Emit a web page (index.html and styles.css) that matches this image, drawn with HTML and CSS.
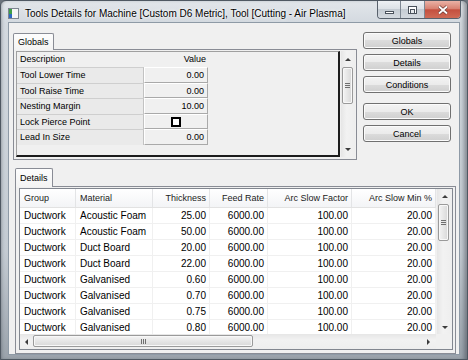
FILE: index.html
```html
<!DOCTYPE html>
<html lang="en">
<head>
    <meta charset="UTF-8">
    <title>Tools Details</title>
    <link rel="stylesheet" href="styles.css">
</head>
<body>
<div class="window">
    <div class="titlebar">
        <svg class="app-icon" viewBox="0 0 11 11">
            <rect x="0.5" y="0.5" width="10" height="10" fill="#f6f6f6" stroke="#7d8590"/>
            <rect x="1" y="1" width="3" height="5" fill="#3f9e48"/>
            <rect x="1" y="6" width="3" height="4" fill="#2f68c0"/>
        </svg>
        <span class="title">Tools Details for Machine [Custom D6 Metric], Tool [Cutting - Air Plasma]</span>
        <div class="caption">
            <span class="cap-btn cap-min"><i class="glyph-min"></i></span>
            <span class="cap-btn cap-max"><i class="glyph-max"></i></span>
            <span class="cap-btn cap-close">
                <svg width="12" height="10" viewBox="0 0 12 10">
                    <path d="M2 1.5 L10 8.5 M10 1.5 L2 8.5" stroke="#6b3a33" stroke-width="3.2"/>
                    <path d="M2 1.5 L10 8.5 M10 1.5 L2 8.5" stroke="#fff" stroke-width="1.8"/>
                </svg>
            </span>
        </div>
    </div>

    <div class="client">
        <div class="top-row">
            <div class="tab-group globals">
                <div class="tab">Globals</div>
                <div class="tab-panel globals-panel">
                    <div class="prop-grid">
                        <div class="prop-head"><span class="h-name">Description</span><span class="h-value">Value</span></div>
                        <div class="prop-row"><span class="prop-name">Tool Lower Time</span><span class="prop-value">0.00</span></div>
                        <div class="prop-row"><span class="prop-name">Tool Raise Time</span><span class="prop-value">0.00</span></div>
                        <div class="prop-row"><span class="prop-name">Nesting Margin</span><span class="prop-value">10.00</span></div>
                        <div class="prop-row"><span class="prop-name">Lock Pierce Point</span><span class="prop-value center"><i class="check"></i></span></div>
                        <div class="prop-row"><span class="prop-name">Lead In Size</span><span class="prop-value">0.00</span></div>
                    </div>
                    <div class="vscroll small">
                        <div class="arrow"><i class="tri-up"></i></div>
                        <div class="track">
                            <div class="thumb v" style="height: 37px"><i class="grip-v"></i></div>
                        </div>
                        <div class="arrow"><i class="tri-down"></i></div>
                    </div>
                </div>
            </div>

            <div class="buttons">
                <button class="btn">Globals</button>
                <button class="btn">Details</button>
                <button class="btn">Conditions</button>
                <button class="btn btn-ok">OK</button>
                <button class="btn">Cancel</button>
            </div>
        </div>

        <div class="tab-group details">
            <div class="tab">Details</div>
            <div class="tab-panel details-panel">
                <div class="data-grid">
                    <div class="grid-head cols">
                        <span>Group</span>
                        <span>Material</span>
                        <span class="num">Thickness</span>
                        <span class="num">Feed Rate</span>
                        <span class="num">Arc Slow Factor</span>
                        <span class="num">Arc Slow Min %</span>
                    </div>
                    <div class="vscroll big">
                        <div class="arrow"><i class="tri-up"></i></div>
                        <div class="track">
                            <div class="thumb v" style="height: 37px"><i class="grip-v"></i></div>
                        </div>
                        <div class="arrow"><i class="tri-down"></i></div>
                    </div>
                    <div class="grid-body" id="gridBody"></div>
                    <div class="hscroll">
                        <div class="arrow-h"><i class="tri-left"></i></div>
                        <div class="thumb h" style="width: 220px"><i class="grip-h"></i></div>
                        <div class="track-h"></div>
                        <div class="arrow-h"><i class="tri-right"></i></div>
                    </div>
                    <div class="corner"></div>
                </div>
            </div>
        </div>
    </div>
</div>

<script>
    // rows of the details grid
    const rows = [
        ['Ductwork', 'Acoustic Foam', '25.00'],
        ['Ductwork', 'Acoustic Foam', '50.00'],
        ['Ductwork', 'Duct Board', '20.00'],
        ['Ductwork', 'Duct Board', '22.00'],
        ['Ductwork', 'Galvanised', '0.60'],
        ['Ductwork', 'Galvanised', '0.70'],
        ['Ductwork', 'Galvanised', '0.75'],
        ['Ductwork', 'Galvanised', '0.80']
    ];

    const body = document.getElementById('gridBody');
    rows.forEach(function(r) {
        const row = document.createElement('div');
        row.className = 'grid-row cols';
        const cells = [r[0], r[1], r[2], '6000.00', '100.00', '20.00'];
        cells.forEach(function(text, i) {
            const cell = document.createElement('span');
            if (i > 1) cell.className = 'num';
            cell.textContent = text;
            row.appendChild(cell);
        });
        body.appendChild(row);
    });
</script>
</body>
</html>
```

FILE: styles.css
```css
* {
    box-sizing: border-box;
}
body {
    margin: 0;
    width: 468px;
    height: 360px;
    overflow: hidden;
    background: #6b737c;
    font-family: "Liberation Sans", Arial, sans-serif;
    color: #000;
}
.window {
    width: 468px;
    height: 360px;
    padding: 0 7px 7px 7px;
    border: 1px solid #4f5862;
    border-radius: 6px 6px 0 0;
    background: linear-gradient(to bottom, #e2e6ea 0, #d3d9df 22px, #c4cbd2 70%, #9aa2ab 100%);
    box-shadow: inset -5px 0 4px -2px rgba(50, 56, 64, 0.45), inset 3px 0 3px -2px rgba(60, 66, 74, 0.35);
    display: flex;
    flex-direction: column;
}

/* title bar */
.titlebar {
    height: 21px;
    flex: none;
    display: flex;
    align-items: flex-start;
}
.app-icon {
    width: 11px;
    height: 11px;
    flex: none;
    margin: 7px 0 0 0;
}
.title {
    margin: 7px 0 0 6px;
    font-size: 10px;
    line-height: 12px;
    white-space: nowrap;
    text-shadow: 0 0 4px #fff, 0 0 2px #fff;
}
.caption {
    margin-left: auto;
    margin-right: -1px;
    display: flex;
    height: 18px;
    border: 1px solid #58616c;
    border-top: none;
    border-radius: 0 0 4px 4px;
    overflow: hidden;
}
.cap-btn {
    display: flex;
    align-items: center;
    justify-content: center;
    height: 100%;
}
.cap-min, .cap-max {
    background: linear-gradient(to bottom, #eef1f4 0, #dde2e7 45%, #c5ccd3 50%, #d3d9df 100%);
    border-right: 1px solid #7d8792;
}
.cap-min {
    width: 23px;
}
.cap-max {
    width: 24px;
}
.cap-close {
    width: 35px;
    background: linear-gradient(to bottom, #eab2a6 0, #d88272 45%, #c4503f 52%, #cf6a55 100%);
}
.glyph-min {
    width: 9px;
    height: 3px;
    margin-top: 5px;
    background: #fff;
    border: 1px solid #4a525c;
}
.glyph-max {
    width: 9px;
    height: 8px;
    border: 1px solid #4a525c;
    background: #fff;
    box-shadow: inset 0 0 0 1px #fff, inset 1px 3px 0 1px #fff;
    position: relative;
}
.glyph-max::after {
    content: "";
    display: block;
    margin: 2px 1px 0 1px;
    height: 3px;
    border: 1px solid #4a525c;
    background: #e6e9ec;
}

/* client area */
.client {
    flex: 1;
    background: #f0f0f0;
    border: 1px solid #8e9aa6;
    display: flex;
    flex-direction: column;
}
.top-row {
    display: flex;
    align-items: flex-start;
    margin-top: 8px;
}

/* tabs */
.tab {
    display: inline-block;
    position: relative;
    z-index: 1;
    margin-bottom: -1px;
    padding: 0 4px;
    border: 1px solid #898c95;
    border-bottom: none;
    border-radius: 2px 2px 0 0;
    background: linear-gradient(to bottom, #fdfdfd, #f3f3f3);
    font-size: 9px;
}
.tab-panel {
    border: 1px solid #898c95;
    background: #f0f0f0;
}
.globals {
    margin-left: 4px;
    width: 344px;
}
.globals .tab {
    height: 17px;
    line-height: 16px;
}
.globals-panel {
    height: 111px;
    padding: 1px 1px 2px 2px;
    display: flex;
    gap: 1px;
}

/* globals property grid */
.prop-grid {
    width: 324px;
    border-style: solid;
    border-width: 1px 2px 2px 1px;
    border-color: #a0a0a0 #1c1c1c #1c1c1c #a0a0a0;
    background: #f0f0f0;
    font-size: 9px;
}
.prop-head {
    display: flex;
    height: 15px;
    line-height: 15px;
}
.h-name {
    width: 127px;
    padding-left: 3px;
}
.h-value {
    width: 64px;
    text-align: right;
    padding-right: 2px;
}
.prop-row {
    display: flex;
    height: 15.6px;
    line-height: 14px;
}
.prop-name {
    width: 127px;
    padding-left: 3px;
    background: #eaeaea;
    border-top: 1px solid #cfcfcf;
    border-right: 1px solid #c2c2c2;
}
.prop-value {
    width: 64px;
    text-align: right;
    padding-right: 3px;
    background: #f0f0f0;
    border-style: solid;
    border-width: 1px;
    border-color: #ffffff #a9a9a9 #a9a9a9 #ffffff;
}
.prop-value.center {
    display: flex;
    align-items: center;
    justify-content: center;
    padding: 0;
}
.check {
    width: 10px;
    height: 10px;
    border: 2px solid #000;
    background: #fff;
}

/* scrollbars */
.vscroll {
    display: flex;
    flex-direction: column;
    background: linear-gradient(to right, #e6e6e6, #f2f2f2 40%, #eeeeee);
}
.vscroll.small {
    width: 14px;
}
.vscroll.big {
    grid-row: 1 / 3;
    grid-column: 2;
    border-left: 1px solid #f0f0f0;
}
.arrow {
    height: 16px;
    flex: none;
    display: flex;
    align-items: center;
    justify-content: center;
}
.vscroll.big .arrow {
    height: 14px;
}
.track {
    flex: 1;
}
.thumb {
    display: flex;
    align-items: center;
    justify-content: center;
    border: 1px solid #9a9a9a;
    border-radius: 2px;
    box-shadow: inset 0 0 0 1px #f8f8f8;
}
.thumb.v {
    margin: 0 2px 0 1px;
    background: linear-gradient(to right, #f4f4f4, #e6e6e6 50%, #d8d8d8);
}
.vscroll.big .thumb.v {
    margin: 1px 3px 0 1px;
}
.thumb.h {
    flex: none;
    height: 12px;
    margin-top: 1px;
    background: linear-gradient(to bottom, #f4f4f4, #e6e6e6 50%, #d8d8d8);
}
.grip-v {
    width: 5px;
    height: 5px;
    background: repeating-linear-gradient(to bottom, #6f6f6f 0, #6f6f6f 1px, transparent 1px, transparent 2px);
}
.grip-h {
    width: 5px;
    height: 5px;
    background: repeating-linear-gradient(to right, #6f6f6f 0, #6f6f6f 1px, transparent 1px, transparent 2px);
}
.tri-up, .tri-down, .tri-left, .tri-right {
    width: 0;
    height: 0;
    border: 3px solid transparent;
}
.tri-up {
    border-bottom: 3px solid #3c3c3c;
    border-top-width: 0;
}
.tri-down {
    border-top: 3px solid #3c3c3c;
    border-bottom-width: 0;
}
.tri-left {
    border-right: 3px solid #3c3c3c;
    border-left-width: 0;
}
.tri-right {
    border-left: 3px solid #3c3c3c;
    border-right-width: 0;
}
.hscroll {
    grid-row: 3;
    grid-column: 1;
    display: flex;
    background: linear-gradient(to bottom, #e6e6e6, #f2f2f2 40%, #eeeeee);
}
.arrow-h {
    width: 13px;
    flex: none;
    display: flex;
    align-items: center;
    justify-content: center;
}
.arrow-h:last-child {
    width: 16px;
}
.track-h {
    flex: 1;
}
.corner {
    grid-row: 3;
    grid-column: 2;
    background: #f0f0f0;
}

/* buttons */
.buttons {
    width: 88px;
    margin: 1px 0 0 6px;
    display: flex;
    flex-direction: column;
    gap: 5px;
}
.btn {
    height: 17px;
    padding: 0;
    border: 1px solid #707070;
    border-radius: 3px;
    background: linear-gradient(to bottom, #f3f3f3 0, #ebebeb 50%, #dcdcdc 50%, #cfcfcf 100%);
    box-shadow: inset 0 0 0 1px #fbfbfb;
    font-family: "Liberation Sans", Arial, sans-serif;
    font-size: 9px;
    color: #000;
}
.btn-ok {
    margin-top: 5px;
}

/* details */
.details {
    margin: 7px 0 0 6px;
    width: 441px;
}
.details .tab {
    height: 19px;
    line-height: 18px;
}
.details-panel {
    height: 168px;
    padding: 1px 2px 3px 3px;
}
.data-grid {
    border: 1px solid #828790;
    display: grid;
    grid-template-columns: 416px 16px;
    grid-template-rows: 19px 126px 15px;
    background: #fff;
}
.cols {
    display: grid;
    grid-template-columns: 56px 77px 57px 58px 84px 84px;
}
.grid-head {
    grid-row: 1;
    grid-column: 1;
    background: linear-gradient(to bottom, #ffffff, #f3f4f6);
    border-bottom: 1px solid #e2e2e2;
    font-size: 9px;
    line-height: 18px;
    color: #1a1a1a;
}
.grid-head span {
    padding: 0 3px 0 4px;
    border-right: 1px solid #e3e4e6;
    white-space: nowrap;
}
.grid-body {
    grid-row: 2;
    grid-column: 1;
    overflow: hidden;
}
.grid-row {
    height: 16px;
    font-size: 10px;
    line-height: 15px;
}
.grid-row span {
    padding: 0 3px 0 4px;
    border-right: 1px solid #f0f0f0;
    border-bottom: 1px solid #f0f0f0;
    white-space: nowrap;
}
.num {
    text-align: right;
}
```
